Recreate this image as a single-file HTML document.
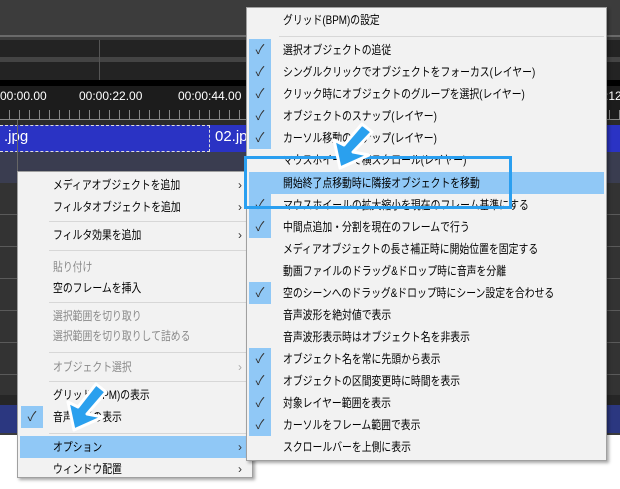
<!DOCTYPE html><html><head><meta charset="utf-8"><style>
*{margin:0;padding:0;box-sizing:border-box}
body{width:620px;height:489px;overflow:hidden;background:#fff;position:relative;font-family:"Liberation Sans","Noto Sans CJK JP",sans-serif;font-size:12px;color:#000}
.a{position:absolute}
.menu{position:absolute;background:#f2f2f2;border:1px solid #a0a0a0;box-shadow:2px 2px 3px rgba(0,0,0,.35)}
.it{position:absolute;left:0;right:0;height:22px;line-height:22px;white-space:nowrap}
.it b{font-weight:normal;display:inline-block;transform:scaleX(.82);transform-origin:0 50%}
.g{color:#8a8a8a}
.sep{position:absolute;height:1px;background:#d7d7d7}
.chk{position:absolute;width:22px;height:22px;background:#90c8f6;text-align:center;font-size:13px;line-height:22px;color:#333}
.ar{position:absolute;right:10px;color:#333;font-size:12px}
.hl{background:#90c8f6}
</style></head><body>
<div class="a" style="left:0;top:0;width:620px;height:435px;background:#3c3c3c"></div>
<div class="a" style="left:0;top:35px;width:620px;height:2px;background:#6a6a6a"></div>
<div class="a" style="left:0;top:40px;width:620px;height:40px;background:#232323"></div>
<div class="a" style="left:0;top:57px;width:620px;height:5px;background:#444"></div>
<div class="a" style="left:99px;top:40px;width:1px;height:40px;background:#555"></div>
<div class="a" style="left:0;top:80px;width:620px;height:6px;background:#000"></div>
<div class="a" style="left:0;top:86px;width:620px;height:34px;background:#1c1c1c"></div>
<div class="a" style="left:0;top:89px;color:#fff;font-size:12px">00:00.00</div>
<div class="a" style="left:79px;top:89px;color:#fff;font-size:12px">00:00:22.00</div>
<div class="a" style="left:178px;top:89px;color:#fff;font-size:12px">00:00:44.00</div>
<div class="a" style="left:605px;top:89px;color:#fff;font-size:12px">:12</div>
<div class="a" style="left:0;top:110px;width:620px;height:10px;background:repeating-linear-gradient(90deg,transparent 0 9px,#888 9px 10px)"></div>
<div class="a" style="left:0;top:119px;width:620px;height:1px;background:#888"></div>
<div class="a" style="left:0;top:120px;width:620px;height:5px;background:#2b2b2b"></div>
<div class="a" style="left:0;top:125px;width:620px;height:27px;background:#2a33c4"></div>
<div class="a" style="left:0;top:125px;width:210px;height:27px;border:1px dashed #ddd;border-left:none"></div>
<div class="a" style="left:4px;top:128px;color:#fff;font-size:15px">.jpg</div>
<div class="a" style="left:215px;top:128px;color:#fff;font-size:15px">02.jpg</div>
<div class="a" style="left:0;top:152px;width:620px;height:31px;background:#3a3d50"></div>
<div class="a" style="left:0;top:183px;width:620px;height:222px;background:repeating-linear-gradient(180deg,#333 0 31px,#5a5a5a 31px 32px)"></div>
<div class="a" style="left:0;top:395px;width:620px;height:10px;background:#262626"></div>
<div class="a" style="left:0;top:405px;width:620px;height:28px;background:#2b3780"></div>
<div class="a" style="left:17px;top:120px;width:1px;height:300px;background:#666"></div>

<div class="menu" style="left:17px;top:171px;width:236px;height:307px">
<div class="it" style="top:2px;padding-left:35px"><b>メディアオブジェクトを追加</b><span class="ar">›</span></div>
<div class="it" style="top:24px;padding-left:35px"><b>フィルタオブジェクトを追加</b><span class="ar">›</span></div>
<div class="sep" style="left:31px;right:2px;top:49px"></div>
<div class="it" style="top:52px;padding-left:35px"><b>フィルタ効果を追加</b><span class="ar">›</span></div>
<div class="sep" style="left:31px;right:2px;top:78px"></div>
<div class="it g" style="top:84px;padding-left:35px"><b>貼り付け</b></div>
<div class="it" style="top:105px;padding-left:35px"><b>空のフレームを挿入</b></div>
<div class="sep" style="left:31px;right:2px;top:130px"></div>
<div class="it g" style="top:133px;padding-left:35px"><b>選択範囲を切り取り</b></div>
<div class="it g" style="top:153px;padding-left:35px"><b>選択範囲を切り取りして詰める</b></div>
<div class="sep" style="left:31px;right:2px;top:180px"></div>
<div class="it g" style="top:184px;padding-left:35px"><b>オブジェクト選択</b><span class="ar" style="color:#aaa">›</span></div>
<div class="sep" style="left:31px;right:2px;top:209px"></div>
<div class="it" style="top:212px;padding-left:35px"><b>グリッド(BPM)の表示</b></div>
<div class="chk" style="left:3px;top:234px">✓</div>
<div class="it" style="top:234px;padding-left:35px"><b>音声波形の表示</b></div>
<div class="sep" style="left:31px;right:2px;top:261px"></div>
<div class="it hl" style="top:264px;left:2px;right:5px;padding-left:33px"><b>オプション</b><span class="ar" style="right:5px">›</span></div>
<div class="it" style="top:286px;padding-left:35px"><b>ウィンドウ配置</b><span class="ar">›</span></div>
</div>

<div class="menu" style="left:246px;top:7px;width:361px;height:454px">
<div class="it" style="top:1px;padding-left:36px"><b>グリッド(BPM)の設定</b></div>
<div class="sep" style="left:32px;right:2px;top:28px"></div>
<div class="it hl" style="top:164px;left:2px;right:2px"></div>
<div id="r"></div>
</div>
<script>
var items=[["選択オブジェクトの追従",1],["シングルクリックでオブジェクトをフォーカス(レイヤー)",1],["クリック時にオブジェクトのグループを選択(レイヤー)",1],["オブジェクトのスナップ(レイヤー)",1],["カーソル移動のスナップ(レイヤー)",1],["マウスホイールで横スクロール(レイヤー)",0],["開始終了点移動時に隣接オブジェクトを移動",0],["マウスホイールの拡大縮小を現在のフレーム基準にする",1],["中間点追加・分割を現在のフレームで行う",1],["メディアオブジェクトの長さ補正時に開始位置を固定する",0],["動画ファイルのドラッグ&ドロップ時に音声を分離",0],["空のシーンへのドラッグ&ドロップ時にシーン設定を合わせる",1],["音声波形を絶対値で表示",0],["音声波形表示時はオブジェクト名を非表示",0],["オブジェクト名を常に先頭から表示",1],["オブジェクトの区間変更時に時間を表示",1],["対象レイヤー範囲を表示",1],["カーソルをフレーム範囲で表示",1],["スクロールバーを上側に表示",0]];
var h="";items.forEach(function(x,i){var t=31+i*22;if(i>=6)t+=1;
if(x[1])h+='<div class="chk" style="left:2px;top:'+t+'px">✓</div>';
h+='<div class="it" style="top:'+t+'px;padding-left:36px"><b>'+x[0]+'</b></div>';});
document.getElementById("r").outerHTML=h;
</script>
<div class="a" style="left:244px;top:156px;width:268px;height:53px;border:3px solid #2a9ff0"></div>
<svg class="a" style="left:0;top:0" width="620" height="489">
<g fill="#2aa0ee" stroke="#fff" stroke-width="3" stroke-linejoin="round">
<path d="M340 168 L334 140 L344 145 L362 124 L372 132 L353 152 L369 155 Z"/>
<path d="M74 430 L68 402 L78 407 L96 384 L106 392 L87 414 L103 417 Z"/>
</g></svg>
</body></html>
